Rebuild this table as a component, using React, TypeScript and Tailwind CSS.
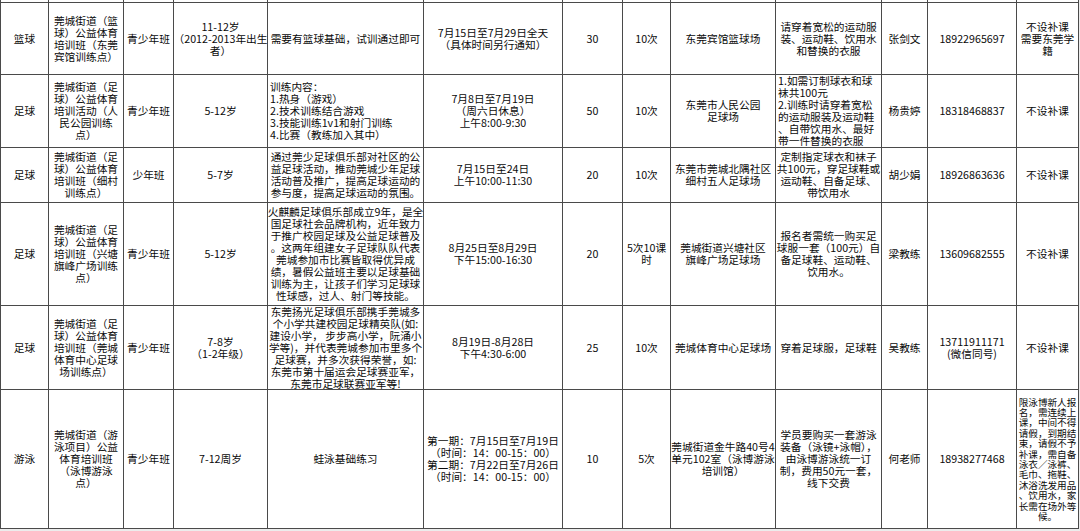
import React from "react";

type Cell = {
  lines: string[];
  left?: boolean;
  small?: boolean;
};

const c = (text: string, opts: Partial<Cell> = {}): Cell => ({
  lines: text.split("/"),
  ...opts,
});

const rows: Cell[][] = [
  [
    c("篮球"),
    c("莞城街道（篮/球）公益体育/培训班（东莞/宾馆训练点）"),
    c("青少年班"),
    c("11-12岁/（2012-2013年出生/者）"),
    c("需要有篮球基础，试训通过即可"),
    c("7月15日至7月29日全天/（具体时间另行通知）"),
    c("30"),
    c("10次"),
    c("东莞宾馆篮球场"),
    c("请穿着宽松的运动服/装、运动鞋、饮用水/和替换的衣服"),
    c("张剑文"),
    c("18922965697"),
    c("不设补课/需要东莞学/籍"),
  ],
  [
    c("足球"),
    c("莞城街道（足/球）公益体育/培训活动（人/民公园训练/点）"),
    c("青少年班"),
    c("5-12岁"),
    c("训练内容：/1.热身（游戏）/2.技术训练结合游戏/3.技能训练1v1和射门训练/4.比赛（教练加入其中）", { left: true }),
    c("7月8日至7月19日/（周六日休息）/上午8:00-9:30"),
    c("50"),
    c("10次"),
    c("东莞市人民公园/足球场"),
    c("1.如需订制球衣和球/袜共100元/2.训练时请穿着宽松/的运动服装及运动鞋/、自带饮用水、最好/带一件替换的衣服", { left: true }),
    c("杨贵婷"),
    c("18318468837"),
    c("不设补课"),
  ],
  [
    c("足球"),
    c("莞城街道（足/球）公益体育/培训班（细村/训练点）"),
    c("少年班"),
    c("5-7岁"),
    c("通过莞少足球俱乐部对社区的公/益足球活动，推动莞城少年足球/活动普及推广，提高足球运动的/参与度，提高足球运动的氛围。"),
    c("7月15日至24日/上午10:00-11:30"),
    c("20"),
    c("10次"),
    c("东莞市莞城北隅社区/细村五人足球场"),
    c("定制指定球衣和袜子/共100元，穿足球鞋或/运动鞋、自备足球、/带饮用水"),
    c("胡少娟"),
    c("18926863636"),
    c("不设补课"),
  ],
  [
    c("足球"),
    c("莞城街道（足/球）公益体育/培训班（兴塘/旗峰广场训练/点）"),
    c("青少年班"),
    c("5-12岁"),
    c("火麒麟足球俱乐部成立9年，是全/国足球社会品牌机构，近年致力/于推广校园足球及公益足球普及/。这两年组建女子足球队队代表/莞城参加市比赛皆取得优异成/绩，暑假公益班主要以足球基础/训练为主，让孩子们学习足球球/性球感，过人、射门等技能。"),
    c("8月25日至8月29日/下午15:00-16:30"),
    c("20"),
    c("5次10课/时"),
    c("莞城街道兴塘社区/旗峰广场足球场"),
    c("报名者需统一购买足/球服一套（100元）自/备足球鞋、运动鞋、/饮用水。"),
    c("梁教练"),
    c("13609682555"),
    c("不设补课"),
  ],
  [
    c("足球"),
    c("莞城街道（足/球）公益体育/培训班（莞城/体育中心足球/场训练点）"),
    c("青少年班"),
    c("7-8岁/（1-2年级）"),
    c("东莞扬光足球俱乐部携手莞城多/个小学共建校园足球精英队(如:/建设小学， 步步高小学，阮涌小/学等)，并代表莞城参加市里多个/足球赛，并多次获得荣誉，如:/东莞市第十届运会足球赛亚军，/东莞市足球联赛亚军等!"),
    c("8月19日-8月28日/下午4:30-6:00"),
    c("25"),
    c("10次"),
    c("莞城体育中心足球场"),
    c("穿着足球服，足球鞋"),
    c("吴教练"),
    c("13711911171/(微信同号)"),
    c("不设补课"),
  ],
  [
    c("游泳"),
    c("莞城街道（游/泳项目）公益/体育培训班/（泳博游泳/点）"),
    c("青少年班"),
    c("7-12周岁"),
    c("蛙泳基础练习"),
    c("第一期：7月15日至7月19日/（时间：14：00-15：00）/第二期：7月22日至7月26日/（时间：14：00-15：00）"),
    c("10"),
    c("5次"),
    c("莞城街道金牛路40号4/单元102室（泳博游泳/培训馆）"),
    c("学员要购买一套游泳/装备（泳镜+泳帽），/由泳博游泳统一订/制，费用50元一套，/线下交费"),
    c("何老师"),
    c("18938277468"),
    c("限泳博新人报/名，需连续上/课，中间不得/请假，到期结/束，请假不予/补课，需自备/泳衣／泳裤、/毛巾、拖鞋、/沐浴洗发用品/、饮用水，家/长需在场外等/候。", { small: true }),
  ],
];

function GridCell({ cell }: { cell: Cell }) {
  return (
    <div
      className={`flex items-center overflow-hidden bg-white px-[2px] whitespace-nowrap ${
        cell.left ? "justify-start text-left" : "justify-center text-center"
      } ${cell.small ? "text-[9.6px] leading-[10.4px]" : "text-[10.7px] leading-[12px]"}`}
    >
      <div>
        {cell.lines.map((line, i) => (
          <div key={i}>{line}</div>
        ))}
      </div>
    </div>
  );
}

export default function App() {
  return (
    <div className="h-[531px] w-[1080px] overflow-hidden bg-[#ececec] font-['Noto_Sans_CJK_SC',sans-serif] text-[#0a0a0a]">
      <div className="grid w-[1079px] grid-cols-[47px_74px_49px_93px_155px_138px_59px_47px_104px_105px_45px_88px_61px] grid-rows-[2px_71px_72px_54px_102px_83px_138px] gap-px bg-[#4a4a4a] px-px pb-px">
        {Array.from({ length: 13 }).map((_, i) => (
          <div key={`top-${i}`} className="bg-white" />
        ))}
        {rows.map((row, r) =>
          row.map((cell, i) => <GridCell key={`${r}-${i}`} cell={cell} />)
        )}
      </div>
    </div>
  );
}
